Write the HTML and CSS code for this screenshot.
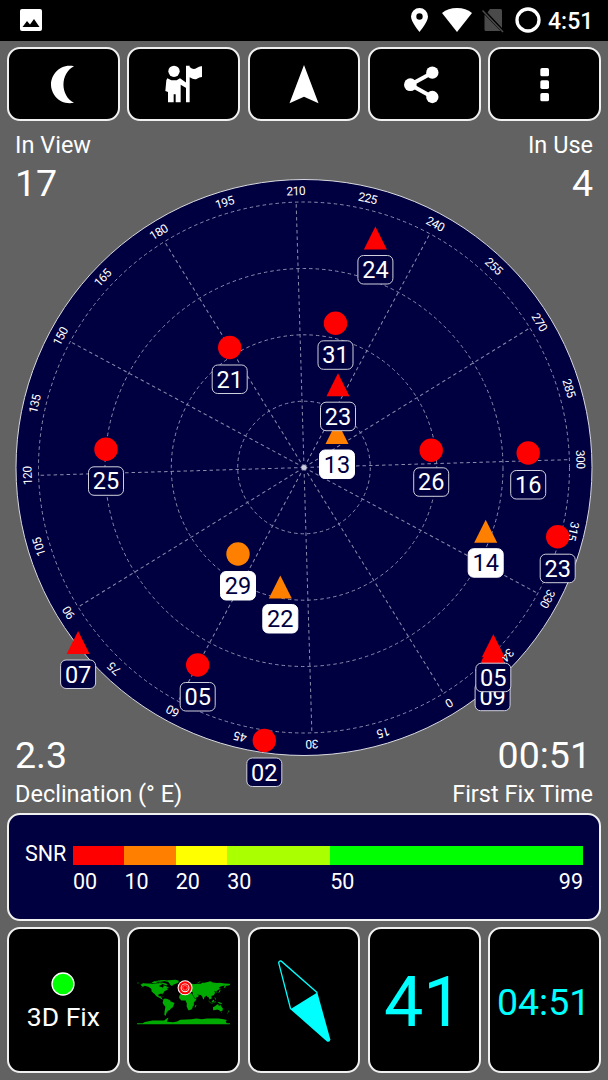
FILE: index.html
```html
<!DOCTYPE html>
<html lang="en">
<head>
    <meta charset="UTF-8">
    <meta name="viewport" content="width=device-width, initial-scale=1.0">
    <title>GPS Status</title>
    <link rel="stylesheet" href="styles.css">
</head>
<body>
    <div class="status">
        <svg class="pic" width="22" height="22" viewBox="0 0 22 22"><rect width="22" height="22" rx="2" fill="#fff"/><path d="M2.500 18l4.500-6 3 3.500 4-5.500 5.500 8z"/></svg>
        <svg class="pin" width="17" height="24" viewBox="0 0 17 24"><path fill="#fff" fill-rule="evenodd" d="M8.500 0A8.500 8.500 0 0 0 0 8.500C0 14 8.500 24 8.500 24S17 14 17 8.500A8.500 8.500 0 0 0 8.500 0zm0 5.300a3.200 3.200 0 1 1 0 6.400 3.200 3.200 0 0 1 0-6.400z"/></svg>
        <svg class="wifi" width="30" height="24" viewBox="0 0 30 24"><path fill="#fff" d="M15 24L0 5Q6 0 15 0T30 5z"/></svg>
        <svg class="sim" width="22" height="24" viewBox="0 0 22 24"><path fill="#4a4a4a" d="M8 1h10.500q1.500 0 1.500 1.500V20L5.500 4.500zM2.500 6.500L18.500 23H4q-1.500 0-1.500-1.500z"/><path stroke="#4a4a4a" stroke-width="1.500" d="M.5 2.500L21 24"/></svg>
        <svg class="ring" width="26" height="26" viewBox="0 0 26 26"><circle cx="13" cy="13" r="11" fill="none" stroke="#fff" stroke-width="3.300"/></svg>
        <span class="time">4:51</span>
    </div>

    <div class="toolbar">
        <div class="btn">
            <svg class="icon" viewBox="-21 -20.500 40 40"><path d="M10-18.300C-5-21-13-9-13 0S-5 21 10 18.300C-4 11-4-11 10-18.300z"/></svg>
        </div>
        <div class="btn">
            <svg class="icon" viewBox="-60 -61 120 120">
                <circle cx="-30" cy="-39" r="17"/>
                <path d="M-50-18L-38-12H-22L-12-18 8-4V12L-10 1V54H-25V30H-31V54H-48V23L-56 20-53-12z"/>
                <path d="M6-56H17V-52Q28-42 38-49T54-54V-22Q46-22 39-17T17-21V54H6z"/>
            </svg>
        </div>
        <div class="btn">
            <svg class="icon" viewBox="-20 -20.300 40 40"><path d="M0-19.300L14.500 19 0 12.500-14.500 19z"/></svg>
        </div>
        <div class="btn">
            <svg class="icon" viewBox="-60 -61 120 120">
                <path d="M25-35L-41 1 25 38" fill="none" stroke="#fff" stroke-width="12"/>
                <circle cx="-41" cy="1" r="19"/><circle cx="25" cy="-35" r="18.500"/><circle cx="25" cy="38" r="18.500"/>
            </svg>
        </div>
        <div class="btn">
            <svg class="icon" viewBox="-59 -61 120 120">
                <rect x="-13" y="-49" width="26" height="25" rx="5"/>
                <rect x="-13" y="-12" width="26" height="26" rx="5"/>
                <rect x="-13" y="26" width="26" height="25" rx="5"/>
            </svg>
        </div>
    </div>

    <div class="sky">
        <svg class="dial" width="608" height="692" viewBox="-304 -346.500 608 692">
            <circle class="disc" r="288"/>
            <g class="grid">
                <circle r="66.300"/><circle r="132.700"/><circle r="199"/><circle r="265.500"/>
                <g transform="rotate(-1.700)">
                    <path d="M0 0V-265M0 0V265M0 0H-265M0 0H265"/>
                    <path transform="rotate(30)" d="M0 0V-265M0 0V265M0 0H-265M0 0H265"/>
                    <path transform="rotate(60)" d="M0 0V-265M0 0V265M0 0H-265M0 0H265"/>
                </g>
            </g>
            <circle r="2.500" fill="#ccd"/>
            <g class="deg">
                <text transform="rotate(-211.700)" y="-272.500">0</text>
                <text transform="rotate(-196.700)" y="-272.500">15</text>
                <text transform="rotate(-181.700)" y="-272.500">30</text>
                <text transform="rotate(-166.700)" y="-272.500">45</text>
                <text transform="rotate(-151.700)" y="-272.500">60</text>
                <text transform="rotate(-136.700)" y="-272.500">75</text>
                <text transform="rotate(-121.700)" y="-272.500">90</text>
                <text transform="rotate(-106.700)" y="-272.500">105</text>
                <text transform="rotate(-91.700)" y="-272.500">120</text>
                <text transform="rotate(-76.700)" y="-272.500">135</text>
                <text transform="rotate(-61.700)" y="-272.500">150</text>
                <text transform="rotate(-46.700)" y="-272.500">165</text>
                <text transform="rotate(-31.700)" y="-272.500">180</text>
                <text transform="rotate(-16.700)" y="-272.500">195</text>
                <text transform="rotate(-1.700)" y="-272.500">210</text>
                <text transform="rotate(13.300)" y="-272.500">225</text>
                <text transform="rotate(28.300)" y="-272.500">240</text>
                <text transform="rotate(43.300)" y="-272.500">255</text>
                <text transform="rotate(58.300)" y="-272.500">270</text>
                <text transform="rotate(73.300)" y="-272.500">285</text>
                <text transform="rotate(88.300)" y="-272.500">300</text>
                <text transform="rotate(103.300)" y="-272.500">315</text>
                <text transform="rotate(118.300)" y="-272.500">330</text>
                <text transform="rotate(133.300)" y="-272.500">345</text>
            </g>

            <!-- satellites: circle = GPS, triangle = GLONASS, .used = white label -->
            <g class="sat" transform="translate(71.400 -229.500)"><path d="M0-11.500L11.500 11.500H-11.500z"/><rect x="-17.500" y="17.500" width="35" height="28.500" rx="5.500"/><text y="40.200">24</text></g>
            <g class="sat" transform="translate(31.500 -144.200)"><circle r="11.700"/><rect x="-17.500" y="17.500" width="35" height="28.500" rx="5.500"/><text y="40.200">31</text></g>
            <g class="sat used" transform="translate(33 -35)"><path d="M0-11.500L11.500 11.500H-11.500z"/><rect x="-17.500" y="17.500" width="35" height="28.500" rx="5.500"/><text y="40.200">13</text></g>
            <g class="sat" transform="translate(34 -82.800)"><path d="M0-11.500L11.500 11.500H-11.500z"/><rect x="-17.500" y="17.500" width="35" height="28.500" rx="5.500"/><text y="40.200">23</text></g>
            <g class="sat" transform="translate(127.200 -17.200)"><circle r="11.700"/><rect x="-17.500" y="17.500" width="35" height="28.500" rx="5.500"/><text y="40.200">26</text></g>
            <g class="sat" transform="translate(224.200 -14.500)"><circle r="11.700"/><rect x="-17.500" y="17.500" width="35" height="28.500" rx="5.500"/><text y="40.200">16</text></g>
            <g class="sat used" transform="translate(181.700 63.700)"><path d="M0-11.500L11.500 11.500H-11.500z"/><rect x="-17.500" y="17.500" width="35" height="28.500" rx="5.500"/><text y="40.200">14</text></g>
            <g class="sat" transform="translate(253.700 69.200)"><circle r="11.700"/><rect x="-17.500" y="17.500" width="35" height="28.500" rx="5.500"/><text y="40.200">23</text></g>
            <g class="sat" transform="translate(188.600 197.200)"><circle r="11.700"/><rect x="-17.500" y="17.500" width="35" height="28.500" rx="5.500"/><text y="40.200">09</text></g>
            <g class="sat" transform="translate(189.300 178.200)"><path d="M0-11.500L11.500 11.500H-11.500z"/><rect x="-17.500" y="17.500" width="35" height="28.500" rx="5.500"/><text y="40.200">05</text></g>
            <g class="sat" transform="translate(-74.300 -120)"><circle r="11.700"/><rect x="-17.500" y="17.500" width="35" height="28.500" rx="5.500"/><text y="40.200">21</text></g>
            <g class="sat" transform="translate(-198 -18.200)"><circle r="11.700"/><rect x="-17.500" y="17.500" width="35" height="28.500" rx="5.500"/><text y="40.200">25</text></g>
            <g class="sat used" transform="translate(-66 86.500)"><circle r="11.700"/><rect x="-17.500" y="17.500" width="35" height="28.500" rx="5.500"/><text y="40.200">29</text></g>
            <g class="sat used" transform="translate(-23.700 119.500)"><path d="M0-11.500L11.500 11.500H-11.500z"/><rect x="-17.500" y="17.500" width="35" height="28.500" rx="5.500"/><text y="40.200">22</text></g>
            <g class="sat" transform="translate(-225.900 175)"><path d="M0-11.500L11.500 11.500H-11.500z"/><rect x="-17.500" y="17.500" width="35" height="28.500" rx="5.500"/><text y="40.200">07</text></g>
            <g class="sat" transform="translate(-106.300 197.500)"><circle r="11.700"/><rect x="-17.500" y="17.500" width="35" height="28.500" rx="5.500"/><text y="40.200">05</text></g>
            <g class="sat" transform="translate(-39.700 273)"><circle r="11.700"/><rect x="-17.500" y="17.500" width="35" height="28.500" rx="5.500"/><text y="40.200">02</text></g>
        </svg>
        <div class="stat tl"><span class="label">In View</span><span class="value">17</span></div>
        <div class="stat tr"><span class="label">In Use</span><span class="value">4</span></div>
        <div class="stat bl"><span class="value">2.3</span><span class="label">Declination (° E)</span></div>
        <div class="stat br"><span class="value">00:51</span><span class="label">First Fix Time</span></div>
    </div>

    <div class="snr">
        <span class="name">SNR</span>
        <div class="scale">
            <div class="bar"><i class="c0"></i><i class="c10"></i><i class="c20"></i><i class="c30"></i><i class="c50"></i></div>
            <div class="ticks"><span>00</span><span>10</span><span>20</span><span class="wide">30</span><span>50</span><span class="last">99</span></div>
        </div>
    </div>

    <div class="tiles">
        <div class="btn fix">
            <svg width="24" height="24" viewBox="-12 -12 24 24"><circle r="11" fill="#0f0" stroke="#fff" stroke-width="1.300"/></svg>
            <span>3D Fix</span>
        </div>
        <div class="btn">
            <!-- x = longitude, y = -latitude -->
            <svg class="map" width="93" height="47" viewBox="-180 -90 360 180">
                <g fill="#00aa00">
                    <path d="M-168-66L-156-71-140-70-128-70-115-68-95-68-94-72-85-69-82-67-87-64-94-61-93-58-82-55-79-51-79-55-77-58-78-62-70-61-65-58-60-55-56-52-66-50-60-46-66-44-70-42-75-39-76-35-81-31-80-25-83-30-90-30-97-27-97-21-91-19-87-21-88-16-83-15-83-10-78-9-83-8-92-14-105-20-112-29-117-33-124-40-124-48-134-56-150-61-158-56-165-54-157-59-165-61-161-65z"/>
                    <path d="M-124-75L-112-77-100-73-88-74-80-73-68-70-62-66-66-62-74-65-86-70-100-69-116-70zM-118-78L-100-80-90-82-70-83-62-82-76-78-88-76-104-76zM-180-73H-172V-71H-180z"/>
                    <path d="M-73-78L-60-82-30-84-18-80-20-73-30-69-40-65-44-60-51-64-54-70-60-76z"/>
                    <path d="M-24-65L-14-66-14-64-22-63zM-85-22L-75-20-75-19-84-21z"/>
                    <path d="M-78-9L-72-12-62-10-51-4-50 0-44 2-35 6-39 15-41 22-48 26-53 33-58 35-62 39-65 43-67 48-69 55-74 52-74 45-73 37-70 20-76 14-81 5-79-1z"/>
                    <path d="M-6-35L10-37 11-33 20-30 25-32 33-31 36-23 43-12 51-12 47-4 40 4 40 15 35 20 35 25 30 31 20 35 17 30 12 18 13 8 9 0 8-4-8-4-17-14-16-22z"/>
                    <path d="M44 25L50 15 49 13 44 17z"/>
                    <path d="M-9-37L-9-43-2-44-5-48 2-51 8-54 9-57 13-54 20-55 24-59 22-61 17-57 12-58 5-60 6-63 15-69 28-71 40-67 44-68 55-69 68-69 72-73 82-73 104-78 113-74 130-72 140-73 160-70 180-69 180-65 178-63 164-60 162-55 156-51 157-58 163-62 150-60 137-55 141-50 138-46 130-43 127-39 129-35 126-35 124-40 118-39 122-36 121-30 117-24 108-21 109-13 105-9 101-12 100-7 104-2 99-8 98-16 94-16 90-22 86-21 80-15 79-9 76-9 72-20 67-25 57-26 50-30 57-24 60-22 55-17 44-13 35-28 36-36 27-37 26-40 22-37 19-42 13-45 18-40 16-38 8-44 0-41-2-37z"/>
                    <path d="M-5-50L1-52-3-58-6-57zM52-71L60-76 68-77 58-73zM141-45L144-43 140-36 131-32 135-35zM143-53L142-46 144-50z"/>
                    <path d="M95-5L106 5 104 6 96-3zM106 6L115 8 114 9 105 7zM109-1L117-7 119-4 116 4 110 3zM120 0L125-1 122 5 119 4zM131 1L141 3 149 8 150 11 138 8zM120-18L124-13 126-7 122-9z"/>
                    <path d="M114 22L122 18 130 12 136 12 136 16 140 17 142 11 146 19 153 27 150 37 144 39 138 34 131 31 124 33 115 34zM145 41L148 41 147 44zM173 34L178 38 170 46 167 46 174 41z"/>
                    <path d="M-180 84L-158 84-150 79-140 77-120 74-100 74-75 74-64 65-58 63-62 73-64 78-40 80-25 77-12 71 10 70 30 69 50 66 70 69 90 66 110 66 135 66 150 68 168 72 163 78 168 84 180 84V88H-180z"/>
                </g>
                <g transform="translate(6 -53)">
                    <circle r="29" fill="#fff"/><circle r="25" fill="#f00"/><circle r="17" fill="#fff"/><circle r="13.500" fill="#f00"/><circle r="9" fill="none" stroke="#fff" stroke-width="1.500"/>
                </g>
            </svg>
        </div>
        <div class="btn">
            <svg width="60" height="88" viewBox="57 50 180 263">
                <path d="M107 206L71 67Q72 60 79 62L187 157" fill="none" stroke="#0ff" stroke-width="4"/>
                <path d="M106 206L187 156 226 297Q225 306 216 303z" fill="#0ff"/>
            </svg>
        </div>
        <div class="btn num big">41</div>
        <div class="btn num">04:51</div>
    </div>
</body>
</html>
```
FILE: styles.css
```css
* {
    margin: 0;
    padding: 0;
    box-sizing: border-box;
}
body {
    width: 608px;
    height: 1080px;
    overflow: hidden;
    background-color: #626262;
    color: #fff;
    font-family: Roboto, sans-serif;
}
svg {
    display: block;
    flex: none;
    overflow: visible;
}
.status {
    display: flex;
    align-items: center;
    height: 40.5px;
    padding: 0 14px 0 20px;
    background-color: #000;
}
.pic {
    margin-right: auto;
}
.pin {
    margin-right: 13.5px;
}
.wifi {
    margin-right: 10px;
}
.sim {
    margin-right: 11px;
}
.ring {
    margin-right: 7.5px;
}
.time {
    width: 46px;
    padding-top: 2px;
    font-size: 23px;
    font-weight: 500;
    white-space: nowrap;
}
.toolbar, .tiles {
    display: grid;
    grid-template-columns: repeat(5, 1fr);
    gap: 7.6px;
    padding: 0 7px;
}
.toolbar {
    padding-top: 6.5px;
}
.btn {
    display: flex;
    flex-direction: column;
    align-items: center;
    justify-content: center;
    height: 74px;
    border: 2px solid #f0f0f0;
    border-radius: 13px;
    background-color: #000;
}
.icon {
    width: 40px;
    height: 40px;
    fill: #fff;
}
.sky {
    display: grid;
    grid-template-columns: 1fr 1fr;
    grid-template-rows: 1fr 1fr;
    height: 692px;
}
.dial {
    grid-area: 1 / 1 / 3 / 3;
}
.disc {
    fill: #000040;
    stroke: #d8d8e0;
    stroke-width: 1;
}
.grid {
    fill: none;
    stroke: #8c8cae;
    stroke-width: 1;
    stroke-dasharray: 3.5 3;
}
.deg {
    fill: #fff;
    font-size: 12px;
    letter-spacing: -0.5px;
    text-anchor: middle;
}
.sat {
    fill: #f00;
    font-size: 23.5px;
    text-anchor: middle;
}
.sat rect {
    fill: #000040;
    stroke: #d0d0dc;
}
.sat text {
    fill: #fff;
}
.sat.used {
    fill: #ff8000;
}
.sat.used rect {
    fill: #fff;
    stroke: #fff;
}
.sat.used text {
    fill: #000040;
}
.stat {
    display: flex;
    flex-direction: column;
    padding: 10px 15px 5px;
}
.label {
    font-size: 23.5px;
    line-height: 28px;
}
.value {
    font-size: 37.5px;
    line-height: 48px;
}
.tl {
    grid-area: 1 / 1;
}
.tr {
    grid-area: 1 / 2;
    align-items: flex-end;
}
.bl {
    grid-area: 2 / 1;
    justify-content: flex-end;
}
.br {
    grid-area: 2 / 2;
    align-items: flex-end;
    justify-content: flex-end;
}
.bl .value, .br .value {
    line-height: 49px;
}
.br .value {
    padding-right: 2px;
}
.snr {
    display: flex;
    height: 108px;
    margin: 0 7px 6px;
    padding: 31px 16px 0;
    border: 2px solid #f0f0f0;
    border-radius: 13px;
    background-color: #000040;
    font-size: 21.5px;
}
.name {
    width: 48px;
    line-height: 16px;
}
.scale {
    flex: 1;
}
.bar {
    display: grid;
    grid-template-columns: 51.4px 51.4px 51.4px 103px 1fr;
    height: 19px;
}
.c0 {
    background-color: #f00;
}
.c10 {
    background-color: #ff8000;
}
.c20 {
    background-color: #ff0;
}
.c30 {
    background-color: #aaff00;
}
.c50 {
    background-color: #0f0;
}
.ticks {
    display: flex;
    padding-top: 4px;
    line-height: 25px;
}
.ticks span {
    width: 51.4px;
}
.ticks .wide {
    width: 103px;
}
.ticks .last {
    margin-left: auto;
    text-align: right;
}
.tiles .btn {
    height: 146px;
    padding-top: 2px;
}
.tiles .fix {
    padding-top: 4px;
}
.fix span {
    margin-top: 5px;
    font-size: 26.5px;
    line-height: 32px;
}
.num {
    color: #0ff;
    font-size: 37.5px;
}
.tiles .num {
    padding: 4px 2px 0 0;
}
.big {
    font-size: 70px;
}
```
